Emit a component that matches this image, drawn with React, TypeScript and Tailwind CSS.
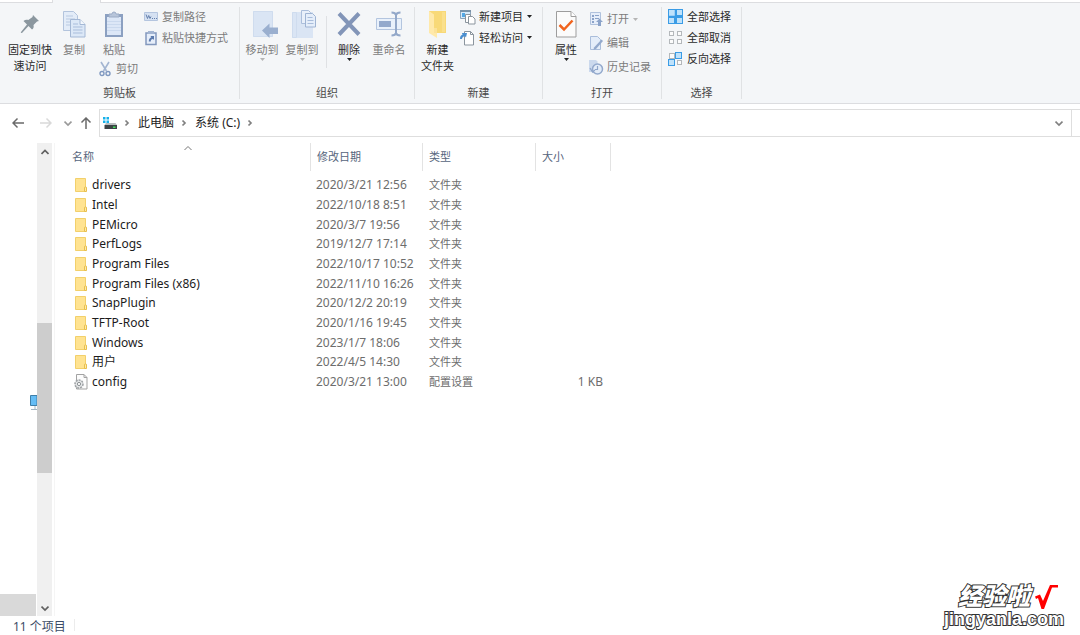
import React from "react";

type P = { children?: React.ReactNode };

const Svg = ({ w, h, children }: P & { w: number; h: number }) => (
  <svg width={w} height={h} viewBox={`0 0 ${w} ${h}`} fill="none" aria-hidden="true" className="shrink-0">
    {children}
  </svg>
);

const PinIcon = () => (
  <Svg w={20} h={20}>
    <path d="M13 1l6 6-2 .5-3.500 3.500c.5 2 0 3.500-1.500 4.500L8.500 12 2 19l-1.200-.2L1 18l6-7.500L3.500 7c1.500-1.300 3-1.500 4.800-1L12.500 3z" fill="#8b979f" />
  </Svg>
);

const CopyIcon = () => (
  <Svg w={24} h={28}>
    <path d="M1.500 1.500h10l4 4v15h-14z" fill="#e3ecf8" stroke="#b3c4dd" />
    <path d="M4 6h7M4 9h9M4 12h9M4 15h9" stroke="#b9cae2" />
    <path d="M8.500 9.500h9.500l5 5v12.500H8.500z" fill="#dce8f7" stroke="#a4b8d5" />
    <path d="M18 9.500v5h5" fill="#f4f8fd" stroke="#a4b8d5" />
    <path d="M11 14h5M11 17h9.500M11 20h9.500M11 23h9.500" stroke="#a9bddb" />
  </Svg>
);

const PasteIcon = () => (
  <Svg w={20} h={28}>
    <path d="M1 4h18v23H1z" fill="#8ba0c1" />
    <path d="M3 7h14v18H3z" fill="#dce7f7" />
    <path d="M3 11.500h14M3 14.500h14M3 17.500h14M3 20.500h14" stroke="#cad9ee" />
    <path d="M5 7V4h3a2 2 0 014 0h3v3z" fill="#b7c5da" stroke="#9aabc5" />
  </Svg>
);

const PathIcon = () => (
  <Svg w={14} h={10}>
    <path d="M.5.5h13v8H.5z" fill="#d5e1f2" stroke="#b4c5df" />
    <path d="M2 2.500l1.500 4 1.200-3 1.300 3 1-2M8 6.500h1M10 6.500h1M12 6.500h1" stroke="#6480ad" />
  </Svg>
);

const ShortcutIcon = () => (
  <Svg w={14} h={16}>
    <path d="M2 3h10v11.500H2z" fill="#e6eefa" stroke="#8298bd" strokeWidth="1.500" />
    <path d="M4 1h6v3H4z" fill="#a3b5d2" />
    <path d="M4.800 11.500c0-2.500 1-3.800 2.500-4L6.500 6H10v4L9 9c-1.800 0-2.200 1-2.200 2.500z" fill="#5c7bae" />
  </Svg>
);

const CutIcon = () => (
  <Svg w={12} h={16}>
    <path d="M2 1l5.500 9M10 1L4.500 10" stroke="#a3b5d1" strokeWidth="1.600" />
    <circle cx="3" cy="12.500" r="2" stroke="#7f98c0" strokeWidth="1.400" />
    <circle cx="9" cy="12.500" r="2" stroke="#7f98c0" strokeWidth="1.400" />
  </Svg>
);

const MoveIcon = () => (
  <Svg w={32} h={28}>
    <g transform="translate(6 0)">
      <path d="M1 1h20v26H1z" fill="#dae5f4" />
      <path d="M1.500 1.500h19v25h-19z" stroke="#cfdcee" />
      <path d="M10 20.500l7.500-7v4H26v6.500h-8.500v4z" fill="#9aafcf" />
    </g>
  </Svg>
);

const CopyToIcon = () => (
  <Svg w={30} h={30}>
    <g transform="translate(4 0)">
      <path d="M1 3h21v26H1z" fill="#dae5f4" />
      <path d="M1.500 3.500h4v25h-4z" stroke="#cfdcee" />
      <path d="M10.500 1.500h7l2 2v11h-9z" fill="#e9f0fa" stroke="#abbedb" />
      <path d="M14.500 4.500h7l3 3v10.500h-10z" fill="#e5eefa" stroke="#9fb4d3" />
      <path d="M16.500 8.500h5M16.500 11.500h6M16.500 14.500h6" stroke="#a9bddb" />
    </g>
  </Svg>
);

const DeleteIcon = () => (
  <Svg w={24} h={24}>
    <path d="M2 1.500l20 21M22 1.500L2 22.500" stroke="#8295b8" strokeWidth="4" />
  </Svg>
);

const RenameIcon = () => (
  <Svg w={28} h={26}>
    <path d="M1.500 7.500h25v11h-25z" fill="#e9f1fb" stroke="#b3c5df" />
    <path d="M4 10h12v6H4z" fill="#93a9cc" />
    <path d="M16.500 1.500c2.500 0 4 .5 4.500 2.500.5-2 2-2.500 4.500-2.500M21 4v18M16.500 24.500c2.500 0 4-.5 4.500-2.500.5 2 2 2.500 4.500 2.500" stroke="#93a8c9" strokeWidth="2" />
  </Svg>
);

const NewFolderIcon = () => (
  <Svg w={18} h={28}>
    <path d="M0 1h17v22H0z" fill="#f8d978" />
    <path d="M0 1l5 3.500V18l3 2v8l-8-5z" fill="#ffe9aa" />
    <path d="M5 18h3v5H5z" fill="#fbe29a" />
    <path d="M13 2h3v20h-3z" fill="#fae08c" />
  </Svg>
);

const NewItemIcon = () => (
  <Svg w={16} h={16}>
    <path d="M.5 1.500h10v8H.5z" fill="#d6eafa" stroke="#8aa4bb" />
    <path d="M0 1h11v2H0z" fill="#7992a8" />
    <path d="M2 4h3v4H2z" fill="#53a7e4" />
    <path d="M5.500 5.500h5v8h-5z" fill="#fff" stroke="#8b959e" />
    <path d="M8.500 7.500h4l2.500 2.500v5H8.500z" fill="#fff" stroke="#8b959e" />
  </Svg>
);

const EasyAccessIcon = () => (
  <Svg w={16} h={16}>
    <path d="M4.500 1.500h6l3 3v10.500h-9z" fill="#fff" stroke="#8b959e" />
    <path d="M10.500 1.500v3h3" stroke="#8b959e" />
    <path d="M0 9c0-2.500.8-4 2.500-4.300L2 3h5L6 7.500 5 6.200C3 6.500 2 7.500 2 9z" fill="#4b8fd0" />
  </Svg>
);

const PropertiesIcon = () => (
  <Svg w={22} h={28}>
    <path d="M1.500 1.500h14.500l5 5v20.500H1.500z" fill="#fbfbfb" stroke="#9d9d9d" />
    <path d="M16 1.500v5h5" fill="#fff" stroke="#9d9d9d" />
    <path d="M4.500 15l4.500 4.500 8.500-9" stroke="#f1641e" strokeWidth="2.500" />
  </Svg>
);

const OpenIcon = () => (
  <Svg w={14} h={16}>
    <path d="M1.500 1.500h10v12h-10z" fill="#e6eefa" stroke="#b0c2dd" />
    <path d="M3 4h2v2H3zM3 7h2v2H3zM3 10h2v2H3zM6 4h4v1H6zM6 7h4v1H6z" fill="#8ba3c9" />
    <path d="M10.500 7.500L14 11h-2v4H9v-4H7z" fill="#8ba3c9" />
  </Svg>
);

const EditIcon = () => (
  <Svg w={14} h={16}>
    <path d="M1.500 1.500h7l3 3v10h-10z" fill="#e4edf9" stroke="#a9bddb" />
    <path d="M5 12.500l7.500-8 1.500 1.500-7 8-2.500 1z" fill="#93a9cc" />
  </Svg>
);

const HistoryIcon = () => (
  <Svg w={16} h={16}>
    <path d="M1 1h7l1.500 1.500V13H1z" fill="#cbd9ed" />
    <circle cx="9.500" cy="10" r="5" fill="#e3ecf8" stroke="#93a9cc" strokeWidth="1.500" />
    <path d="M9.500 7v3.500H7M2 9l2.500 4L7 11" stroke="#8ea5ca" strokeWidth="1.200" />
  </Svg>
);

const Tile = ({ x, y, on, s }: { x: number; y: number; on: boolean; s: number }) => (
  <rect x={x + 0.5} y={y + 0.5} width={s} height={s} fill={on ? "#bfe2fb" : "#fcfcfc"} stroke={on ? "#3a9ce6" : "#b4b8bb"} />
);

const SelectAllIcon = () => (
  <Svg w={16} h={16}>
    <Tile x={0} y={0} on s={7} />
    <Tile x={8} y={0} on s={6} />
    <Tile x={0} y={8} on s={6} />
    <Tile x={8} y={8} on s={6} />
    <path d="M7.500 0v15M0 7.500h15" stroke="#3a9ce6" strokeWidth="1.500" />
  </Svg>
);

const SelectNoneIcon = () => (
  <Svg w={16} h={16}>
    <Tile x={1} y={1} on={false} s={4} />
    <Tile x={9} y={1} on={false} s={4} />
    <Tile x={1} y={9} on={false} s={4} />
    <Tile x={9} y={9} on={false} s={4} />
  </Svg>
);

const InvertIcon = () => (
  <Svg w={16} h={16}>
    <Tile x={1} y={2} on={false} s={5} />
    <Tile x={7} y={1} on s={6} />
    <Tile x={0} y={8} on s={6} />
    <Tile x={9} y={9} on={false} s={4} />
  </Svg>
);

const FolderIcon = () => (
  <Svg w={14} h={16}>
    <path d="M1.500 1.500h10v13h-10z" fill="#ffe391" stroke="#f2d06b" />
    <path d="M10.500 11c0-.8.5-1.200 1.200-1.200.5 0 .8.400.8 1.200v3.500h-2z" fill="#ffe9a8" stroke="#e8bf4c" />
  </Svg>
);

const ConfigIcon = () => (
  <Svg w={14} h={16}>
    <path d="M2.500.5h7.500l3 3v11.500H2.500z" fill="#fcfcfc" stroke="#a3a3a3" />
    <path d="M10 .5v3h3" stroke="#a3a3a3" />
    <circle cx="5" cy="10" r="4" fill="#e4e6e7" stroke="#9da1a4" strokeWidth="1.500" strokeDasharray="2 1" />
    <circle cx="5" cy="10" r="1.600" fill="#fff" stroke="#8d9295" />
  </Svg>
);

const DriveIcon = () => (
  <Svg w={16} h={14}>
    <path d="M1 1h2.500v2.500H1zM4.500 1H7v2.500H4.500zM1 4.500h2.500V7H1zM4.500 4.500H7V7H4.500z" fill="#17b1ea" />
    <path d="M4 7h9.500l1.500 2H2.500z" fill="#b9bdbf" />
    <path d="M2.500 9h12.500v4H2.500z" fill="#3c4245" />
    <path d="M11 10.500h2.500V12H11z" fill="#42e05a" />
  </Svg>
);

const Chevron = ({ dir, color }: { dir: "up" | "down" | "right"; color: string }) => (
  <Svg w={8} h={8}>
    <path
      d={dir === "up" ? "M.5 6L4 2.500 7.500 6" : dir === "down" ? "M.5 2.500L4 6l3.500-3.500" : "M2.500 1.500L5 4 2.500 6.500"}
      stroke={color}
      strokeWidth="1.700"
    />
  </Svg>
);

const SortChevron = () => (
  <Svg w={8} h={6}>
    <path d="M.5 5L4 1.500 7.500 5" stroke="#777" />
  </Svg>
);

const Caret = ({ color }: { color: string }) => (
  <Svg w={5} h={3}>
    <path d="M0 0h5L2.500 3z" fill={color} />
  </Svg>
);

const Arrow = ({ dir, color }: { dir: "left" | "right" | "up"; color: string }) => (
  <Svg w={12} h={12}>
    <path
      d={dir === "left" ? "M12 6H1.500M5.500 1.500L1 6l4.500 4.500" : dir === "right" ? "M0 6h10.500M6.500 1.500L11 6l-4.500 4.500" : "M6 12V1.500M1.500 5.500L6 1l4.500 4.500"}
      stroke={color}
      strokeWidth="1.500"
    />
  </Svg>
);

function BigButton({ icon, lines, width, muted, caret }: { icon: React.ReactNode; lines: string[]; width: string; muted?: boolean; caret?: boolean }) {
  return (
    <button className={`flex flex-col items-center ${width} ${muted ? "text-[#7c7c7c]" : "text-[#2a2a2a]"}`}>
      <span className="flex h-8 items-center">{icon}</span>
      <span className="mt-0.5 block whitespace-nowrap">
        {lines.map((l) => (
          <span key={l} className="block">{l}</span>
        ))}
      </span>
      {caret && <Caret color={muted ? "#b5b5b5" : "#222"} />}
    </button>
  );
}

function SmallButton({ icon, label, height, muted, caret }: { icon: React.ReactNode; label: string; height: string; muted?: boolean; caret?: boolean }) {
  return (
    <button className={`flex items-center gap-1 whitespace-nowrap ${height} ${muted ? "text-[#7c7c7c]" : "text-[#2a2a2a]"}`}>
      <span className="flex w-3.5 justify-center">{icon}</span>
      <span>{label}</span>
      {caret && <Caret color={muted ? "#b5b5b5" : "#222"} />}
    </button>
  );
}

function Group({ title, width, children }: P & { title: string; width: string }) {
  return (
    <section aria-label={title} className={`flex shrink-0 flex-col justify-between ${width}`}>
      <div className="flex items-start pt-[5px]">{children}</div>
      <div className="pb-0.5 text-center text-[#4a4a4a]">{title}</div>
    </section>
  );
}

const Divider = () => <div className="my-1 w-px shrink-0 bg-[#e0e2e4]" />;

const files = [
  ["drivers", "2020/3/21 12:56"],
  ["Intel", "2022/10/18 8:51"],
  ["PEMicro", "2020/3/7 19:56"],
  ["PerfLogs", "2019/12/7 17:14"],
  ["Program Files", "2022/10/17 10:52"],
  ["Program Files (x86)", "2022/11/10 16:26"],
  ["SnapPlugin", "2020/12/2 20:19"],
  ["TFTP-Root", "2020/1/16 19:45"],
  ["Windows", "2023/1/7 18:06"],
  ["用户", "2022/4/5 14:30"],
  ["config", "2020/3/21 13:00", "配置设置", "1 KB"],
];

function Ribbon() {
  return (
    <header className="border-b border-[#dcdde0] bg-[#f4f6f8]">
      <div className="flex h-[3px]">
        <div className="w-[53px] border-b border-r border-[#dcdde0] bg-white" />
        <div className="w-[47px]" />
        <div className="flex-1 border-b border-l border-[#dcdde0] bg-white" />
      </div>
      <div className="flex h-[100px] text-[11px] leading-4">
        <Group title="剪贴板" width="w-[239px]">
          <BigButton icon={<PinIcon />} lines={["固定到快", "速访问"]} width="w-[60px]" />
          <BigButton icon={<CopyIcon />} lines={["复制"]} width="w-7" muted />
          <div className="ml-1.5 w-[50px]">
            <BigButton icon={<PasteIcon />} lines={["粘贴"]} width="w-10" muted />
            <div className="pl-1">
              <SmallButton icon={<CutIcon />} label="剪切" height="h-[21px]" muted />
            </div>
          </div>
          <div className="-mt-0.5">
            <SmallButton icon={<PathIcon />} label="复制路径" height="h-[21px]" muted />
            <SmallButton icon={<ShortcutIcon />} label="粘贴快捷方式" height="h-[21px]" muted />
          </div>
        </Group>
        <Divider />
        <Group title="组织" width="w-[174px]">
          <BigButton icon={<MoveIcon />} lines={["移动到"]} width="w-11" muted caret />
          <BigButton icon={<CopyToIcon />} lines={["复制到"]} width="w-9" muted caret />
          <div className="ml-1.5 mt-2 h-13 w-px bg-[#dfe1e4]" />
          <BigButton icon={<DeleteIcon />} lines={["删除"]} width="w-11" caret />
          <BigButton icon={<RenameIcon />} lines={["重命名"]} width="w-9" muted />
        </Group>
        <Divider />
        <Group title="新建" width="w-[127px]">
          <BigButton icon={<NewFolderIcon />} lines={["新建", "文件夹"]} width="w-[45px]" />
          <div className="-mt-0.5 ml-px">
            <SmallButton icon={<NewItemIcon />} label="新建项目" height="h-[21px]" caret />
            <SmallButton icon={<EasyAccessIcon />} label="轻松访问" height="h-[21px]" caret />
          </div>
        </Group>
        <Divider />
        <Group title="打开" width="w-[118px]">
          <BigButton icon={<PropertiesIcon />} lines={["属性"]} width="w-[46px]" caret />
          <div className="-mt-px">
            <SmallButton icon={<OpenIcon />} label="打开" height="h-6" muted caret />
            <SmallButton icon={<EditIcon />} label="编辑" height="h-6" muted />
            <SmallButton icon={<HistoryIcon />} label="历史记录" height="h-6" muted />
          </div>
        </Group>
        <Divider />
        <Group title="选择" width="w-[79px]">
          <div className="-mt-0.5 ml-[7px]">
            <SmallButton icon={<SelectAllIcon />} label="全部选择" height="h-[21px]" />
            <SmallButton icon={<SelectNoneIcon />} label="全部取消" height="h-[21px]" />
            <SmallButton icon={<InvertIcon />} label="反向选择" height="h-[21px]" />
          </div>
        </Group>
        <Divider />
      </div>
    </header>
  );
}

function AddressBar() {
  return (
    <nav aria-label="地址" className="flex items-center pb-1.5 pt-[5px] text-[#222]">
      <div className="flex w-[99px] shrink-0 items-center pl-3">
        <button aria-label="后退"><Arrow dir="left" color="#6a6a6a" /></button>
        <button aria-label="前进" className="ml-4"><Arrow dir="right" color="#d9d9d9" /></button>
        <button aria-label="最近" className="ml-3"><Chevron dir="down" color="#9a9a9a" /></button>
        <button aria-label="向上" className="ml-2"><Arrow dir="up" color="#6a6a6a" /></button>
      </div>
      <div className="flex h-7 flex-1 items-center border border-[#dedede] pl-0.5 pr-2">
        <DriveIcon />
        <span className="ml-[5px]"><Chevron dir="right" color="#808080" /></span>
        <a href="#pc" className="ml-[7px]">此电脑</a>
        <span className="ml-1.5"><Chevron dir="right" color="#808080" /></span>
        <a href="#c" className="ml-[7px]">系统 (C:)</a>
        <span className="ml-1.5"><Chevron dir="right" color="#808080" /></span>
        <button aria-label="展开" className="ml-auto"><Chevron dir="down" color="#808080" /></button>
      </div>
      <div className="h-7 w-2 border-y border-[#dedede]" />
    </nav>
  );
}

export default function App() {
  return (
    <div className="relative flex min-h-screen flex-col overflow-hidden bg-white font-['Noto_Sans','Noto_Sans_CJK_SC',sans-serif] text-[12px] leading-4">
      <Ribbon />
      <AddressBar />
      <main className="flex flex-1">
        <aside className="flex w-[37px] flex-col items-end">
          <div className="flex-[251]" />
          <Svg w={8} h={16}>
            <path d="M1.500 1.500H8v10H1.500z" fill="#65bdf5" stroke="#3f7fa9" />
            <path d="M2 15.500h6M6 12v3" stroke="#a3b6c2" />
          </Svg>
          <div className="flex-[184]" />
          <div className="h-[22px] w-full border-r border-white bg-[#d9d9d9]" />
        </aside>
        <div className="flex w-[15px] flex-col items-center bg-[#f0f0f0]">
          <div className="flex h-[18px] items-center"><Chevron dir="up" color="#606060" /></div>
          <div className="flex-[162]" />
          <div className="w-full flex-[151] bg-[#cdcdcd]" />
          <div className="flex-[127]" />
          <div className="flex h-4 items-center"><Chevron dir="down" color="#606060" /></div>
        </div>
        <div className="ml-0.5 flex-1 border-l border-[#f5f5f5] pl-[17px]">
          <table className="table-fixed border-collapse">
            <thead>
              <tr className="text-left text-[11px] text-[#56657c]">
                <th className="h-8 w-[239px] p-0 pb-1 font-normal">
                  <div className="relative flex h-7 items-center border-r border-[#e3e3e3]">
                    名称
                    <span className="absolute left-28 top-0.5"><SortChevron /></span>
                  </div>
                </th>
                <th className="w-[112px] p-0 pb-1 font-normal"><div className="flex h-7 items-center border-r border-[#e3e3e3] pl-1.5">修改日期</div></th>
                <th className="w-[113px] p-0 pb-1 font-normal"><div className="flex h-7 items-center border-r border-[#e3e3e3] pl-1.5">类型</div></th>
                <th className="w-[75px] p-0 pb-1 font-normal"><div className="flex h-7 items-center border-r border-[#e3e3e3] pl-1.5">大小</div></th>
              </tr>
            </thead>
            <tbody>
              {files.map(([name, date, type = "文件夹", size = ""]) => (
                <tr key={name} className="h-5 text-[#6d6d6d] nth-[3n]:h-[19px]">
                  <td className="p-0 text-[#1c1c1c]">
                    <div className="flex items-center gap-1 pl-0.5">
                      {name === "config" ? <ConfigIcon /> : <FolderIcon />}
                      <span>{name}</span>
                    </div>
                  </td>
                  <td className="p-0 pl-[5px]">{date}</td>
                  <td className="p-0 pl-1.5 text-[11px]">{type}</td>
                  <td className="p-0 pr-2 text-right">{size}</td>
                </tr>
              ))}
            </tbody>
          </table>
        </div>
      </main>
      <footer className="flex h-[19px] items-start pl-[13px] pt-[3px] text-[#3c4c66]">
        <span className="pr-2">11 个项目</span>
        <span className="h-3 w-px bg-[#ececec]" />
      </footer>
      <div className="absolute bottom-2 right-4 flex flex-col items-end font-['Liberation_Sans','Noto_Sans_CJK_SC',sans-serif] font-bold text-white">
        <div className="flex items-center gap-1 pr-1.5">
          <span className="text-[24px] font-black italic leading-7 [-webkit-text-stroke:2px_#333] [paint-order:stroke_fill]">经验啦</span>
          <Svg w={24} h={26}>
            <path d="M1 12.500l5-2 3 6.500L16 1h8v2.500h-6L10 25H7.500L4 14l-2 1z" fill="#f00" />
          </Svg>
        </div>
        <span className="text-[18px] leading-4 [-webkit-text-stroke:2px_#333] [paint-order:stroke_fill]">jingyanla.com</span>
      </div>
    </div>
  );
}
